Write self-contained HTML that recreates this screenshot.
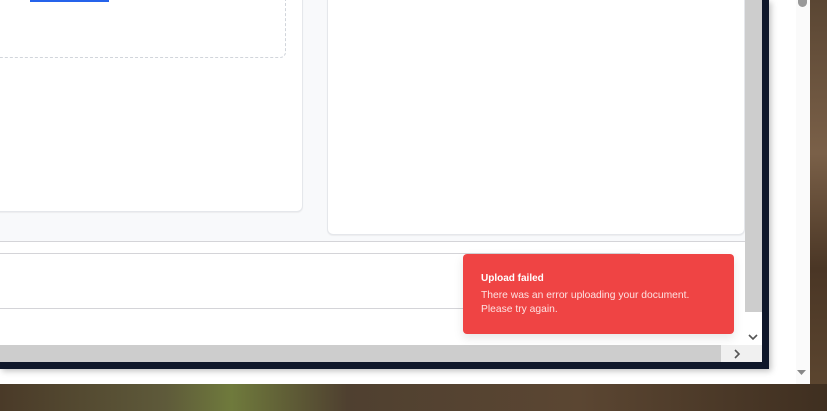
<!DOCTYPE html>
<html><head><style>
*{margin:0;padding:0;box-sizing:border-box}
body{width:827px;height:411px;overflow:hidden;position:relative;font-family:"Liberation Sans",sans-serif;
background:linear-gradient(90deg,#4a3a28 0%,#5e5a3a 20%,#6f7a3c 28%,#4f4030 42%,#5b4632 70%,#3f2f20 100%);}
.bgr{position:absolute;left:810px;top:0;width:17px;height:384px;background:linear-gradient(180deg,#5a4633,#7a6048 40%,#4a3625 70%,#5b452f)}
.outer{position:absolute;left:0;top:0;width:810px;height:384px;background:#fff}
.oscroll{position:absolute;left:796px;top:0;width:14px;height:384px;background:#fafafa}
.thumb{position:absolute;left:798px;top:0;width:9px;height:7px;background:#999;border-radius:0 0 5px 5px}
.frame{position:absolute;left:0;top:0;width:769px;height:369px;background:#0f172a;box-shadow:2px 2px 6px rgba(0,0,0,.25)}
.inner{position:absolute;left:0;top:0;width:762px;height:362px;background:#fff;overflow:hidden}
.content{position:absolute;left:0;top:0;width:745px;height:242px;background:#f8f9fb;border-bottom:1px solid #d4d4d8}
.cardL{position:absolute;left:-10px;top:-10px;width:313px;height:222px;background:#fff;border:1px solid #e5e7eb;border-radius:6px;box-shadow:0 1px 1px rgba(0,0,0,.05)}
.dash{position:absolute;left:-10px;top:-10px;width:296px;height:68px;border:1px dashed #d1d5db;border-radius:6px}
.blue{position:absolute;left:30px;top:0;width:79px;height:2px;background:#2563eb}
.cardR{position:absolute;left:327px;top:-10px;width:418px;height:245px;background:#fff;border:1px solid #e5e7eb;border-radius:6px;box-shadow:0 1px 1px rgba(0,0,0,.05)}
.l1{position:absolute;left:0;top:253px;width:640px;height:1px;background:#d4d4d8}
.l2{position:absolute;left:0;top:308px;width:640px;height:1px;background:#d4d4d8}
.vs{position:absolute;left:745px;top:0;width:17px;height:312px;background:#cdcdcd}
.hs{position:absolute;left:0;top:345px;width:721px;height:17px;background:#cdcdcd}
.hb{position:absolute;left:721px;top:345px;width:41px;height:17px;background:#f0f0f0}
.toast{position:absolute;left:463px;top:254px;width:271px;height:80px;background:#ef4444;border-radius:4px;color:#fff;padding:19px 18px;box-shadow:0 4px 10px rgba(0,0,0,.1)}
.toast b{display:block;font-size:10px;margin-bottom:5px}
.toast p{font-size:10.3px;line-height:14px;color:#fde2e2}
</style></head><body>
<div class="bgr"></div>
<div class="outer">
<div class="oscroll"></div><div class="thumb"></div>
<svg style="position:absolute;left:797px;top:370px" width="10" height="6"><path d="M0 0H9L4.5 5Z" fill="#888"/></svg>
<div class="frame"></div>
<div class="inner">
<div class="content">
<div class="cardL"></div>
<div class="dash"></div>
<div class="blue"></div>
<div class="cardR"></div>
</div>
<div class="l1"></div><div class="l2"></div>
<div class="vs"></div>
<div class="hs"></div><div class="hb"></div>
<svg style="position:absolute;left:733px;top:349px" width="8" height="10"><path d="M2 1L6 5L2 9" stroke="#555" stroke-width="1.6" fill="none"/></svg>
<svg style="position:absolute;left:748px;top:333px" width="10" height="8"><path d="M1 2L5 6L9 2" stroke="#555" stroke-width="1.6" fill="none"/></svg>
</div>
<div class="toast"><b>Upload failed</b><p>There was an error uploading your document.<br>Please try again.</p></div>
</div>
</body></html>
